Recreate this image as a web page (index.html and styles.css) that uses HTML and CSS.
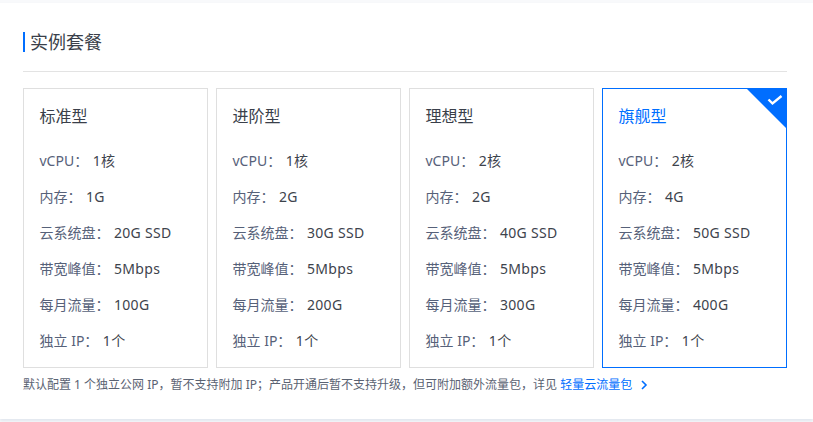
FILE: index.html
```html
<!DOCTYPE html>
<html lang="zh-CN">
<head>
<meta charset="utf-8">
<title>实例套餐</title>
<link rel="stylesheet" href="styles.css">
</head>
<body>
<main class="panel">
  <h2 class="title"><span class="title-text">实例套餐</span></h2>
  <div class="plans">
    <section class="plan">
      <h3 class="plan-name">标准型</h3>
      <dl class="specs">
        <div class="spec"><dt>vCPU：</dt><dd>1核</dd></div>
        <div class="spec"><dt>内存：</dt><dd>1G</dd></div>
        <div class="spec"><dt>云系统盘：</dt><dd>20G SSD</dd></div>
        <div class="spec"><dt>带宽峰值：</dt><dd>5Mbps</dd></div>
        <div class="spec"><dt>每月流量：</dt><dd>100G</dd></div>
        <div class="spec"><dt>独立 IP：</dt><dd>1个</dd></div>
      </dl>
    </section>
    <section class="plan">
      <h3 class="plan-name">进阶型</h3>
      <dl class="specs">
        <div class="spec"><dt>vCPU：</dt><dd>1核</dd></div>
        <div class="spec"><dt>内存：</dt><dd>2G</dd></div>
        <div class="spec"><dt>云系统盘：</dt><dd>30G SSD</dd></div>
        <div class="spec"><dt>带宽峰值：</dt><dd>5Mbps</dd></div>
        <div class="spec"><dt>每月流量：</dt><dd>200G</dd></div>
        <div class="spec"><dt>独立 IP：</dt><dd>1个</dd></div>
      </dl>
    </section>
    <section class="plan">
      <h3 class="plan-name">理想型</h3>
      <dl class="specs">
        <div class="spec"><dt>vCPU：</dt><dd>2核</dd></div>
        <div class="spec"><dt>内存：</dt><dd>2G</dd></div>
        <div class="spec"><dt>云系统盘：</dt><dd>40G SSD</dd></div>
        <div class="spec"><dt>带宽峰值：</dt><dd>5Mbps</dd></div>
        <div class="spec"><dt>每月流量：</dt><dd>300G</dd></div>
        <div class="spec"><dt>独立 IP：</dt><dd>1个</dd></div>
      </dl>
    </section>
    <section class="plan plan-selected">
      <svg class="corner" width="41" height="41" viewBox="0 0 41 41" aria-hidden="true">
        <path class="corner-bg" d="M0 0H41V41Z"/>
        <path class="corner-check" d="M22.5 11.5L26.5 15.5L35.5 8"/>
      </svg>
      <h3 class="plan-name">旗舰型</h3>
      <dl class="specs">
        <div class="spec"><dt>vCPU：</dt><dd>2核</dd></div>
        <div class="spec"><dt>内存：</dt><dd>4G</dd></div>
        <div class="spec"><dt>云系统盘：</dt><dd>50G SSD</dd></div>
        <div class="spec"><dt>带宽峰值：</dt><dd>5Mbps</dd></div>
        <div class="spec"><dt>每月流量：</dt><dd>400G</dd></div>
        <div class="spec"><dt>独立 IP：</dt><dd>1个</dd></div>
      </dl>
    </section>
  </div>
  <p class="note">默认配置 1 个独立公网 IP，暂不支持附加 IP；产品开通后暂不支持升级，但可附加额外流量包，详见 <a class="note-link" href="#">轻量云流量包<svg class="chevron" width="7" height="10" viewBox="0 0 7 10" aria-hidden="true"><path d="M1 1L5 5L1 9"/></svg></a></p>
</main>
</body>
</html>
```
FILE: styles.css
```css
* { box-sizing: border-box; }
html, body { margin: 0; padding: 0; }
body {
  width: 813px;
  height: 422px;
  overflow: hidden;
  background: #f8f9fb;
  font-family: "Noto Sans", "Noto Sans CJK SC", sans-serif;
  color: #414b5c;
}
.panel {
  margin-top: 3px;
  height: 416px;
  background: #fff;
  padding: 29px 26px 0 23px;
  box-shadow: 0 2px 3px rgba(54, 88, 140, 0.12);
}
.title {
  margin: 0;
  height: 40px;
  border-bottom: 1px solid #e3e3e3;
  font-size: 18px;
  font-weight: 400;
  line-height: 20px;
  color: #3a3f4a;
}
.title-text {
  display: block;
  height: 20px;
  padding-left: 5px;
  border-left: 2px solid #006eff;
}
.plans {
  display: grid;
  grid-template-columns: repeat(4, 185px);
  gap: 8px;
  margin-top: 16px;
}
.plan {
  position: relative;
  height: 280px;
  border: 1px solid #dfdfdf;
  padding: 16px 15.5px 0;
}
.plan-selected {
  border-color: #006eff;
}
.corner {
  position: absolute;
  top: -1px;
  right: -1px;
}
.corner-bg { fill: #006eff; }
.corner-check {
  fill: none;
  stroke: #fff;
  stroke-width: 2.4;
}
.plan-name {
  margin: 0;
  height: 22px;
  font-size: 16px;
  font-weight: 400;
  line-height: 22px;
  color: #3a3f4a;
}
.plan-selected .plan-name { color: #006eff; }
.specs {
  margin: 23px 0 0;
  display: flex;
  flex-direction: column;
  gap: 14px;
  font-size: 14px;
  line-height: 22px;
}
.spec {
  display: flex;
  height: 22px;
}
.spec dt { color: #566179; }
.spec dd {
  margin: 0 0 0 4.5px;
  color: #3d434c;
  letter-spacing: 0.3px;
}
.note {
  margin: 8px 0 0;
  font-size: 12px;
  line-height: 18px;
  color: #5a6272;
  white-space: nowrap;
}
.note-link {
  color: #006eff;
  text-decoration: none;
}
.chevron {
  margin-left: 9px;
  fill: none;
  stroke: #006eff;
  stroke-width: 1.6;
  vertical-align: -1px;
}
```
